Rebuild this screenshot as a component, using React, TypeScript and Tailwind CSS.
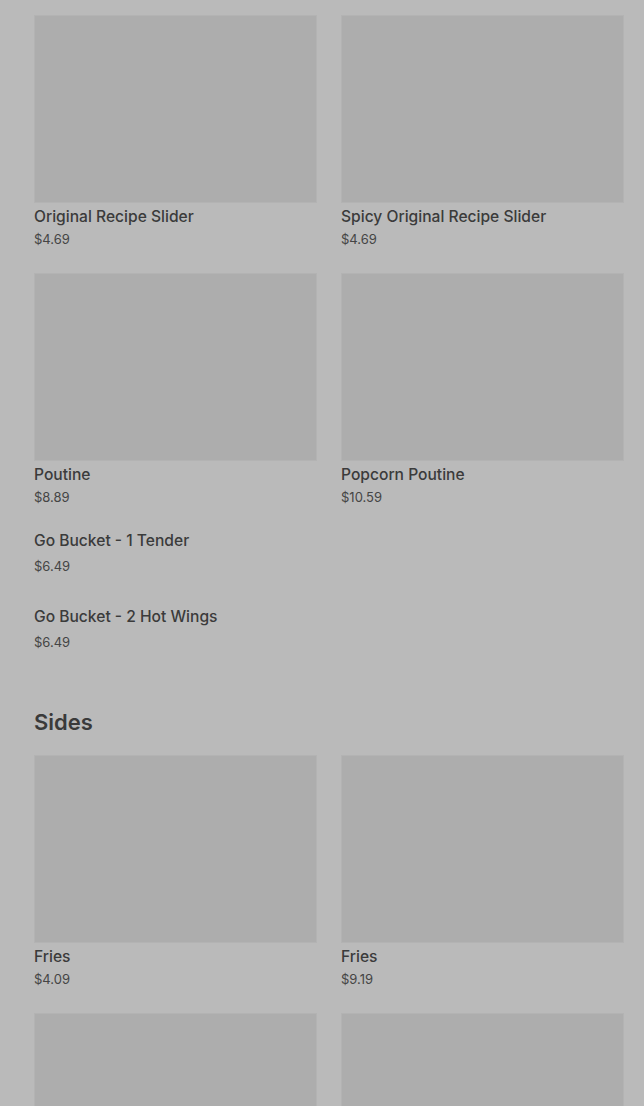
import React from "react";

type Item = { name: string; price: string };

function Card({ item }: { item?: Item }) {
  return (
    <div className="flex flex-col">
      <div className="h-[188px] w-full bg-[#adadad] border border-[#b3b3b3]" />
      {item && (
        <>
          <div className="mt-[4px] h-[20px] text-[15.6px] leading-[20px] font-medium text-[#3b3b3b]">{item.name}</div>
          <div className="mt-[2px] h-[20px] text-[13px] leading-[20px] text-[#454545]">{item.price}</div>
        </>
      )}
    </div>
  );
}

function Plain({ item }: { item: Item }) {
  return (
    <div className="flex flex-col">
      <div className="h-[20px] text-[15.6px] leading-[20px] font-medium text-[#3b3b3b]">{item.name}</div>
      <div className="mt-[5px] h-[20px] text-[13px] leading-[20px] text-[#454545]">{item.price}</div>
    </div>
  );
}

export default function App() {
  return (
    <div
      className="h-[1106px] overflow-hidden w-full bg-[#bababa] pl-[34px] pr-[20px] pt-[15px]"
      style={{ fontFamily: "Inter, 'Noto Sans', sans-serif" }}
    >
      <div className="grid grid-cols-2 gap-x-[24px] gap-y-[24px]">
        <Card item={{ name: "Original Recipe Slider", price: "$4.69" }} />
        <Card item={{ name: "Spicy Original Recipe Slider", price: "$4.69" }} />
        <Card item={{ name: "Poutine", price: "$8.89" }} />
        <Card item={{ name: "Popcorn Poutine", price: "$10.59" }} />
      </div>
      <div className="mt-[24px] flex flex-col gap-[31px]">
        <Plain item={{ name: "Go Bucket - 1 Tender", price: "$6.49" }} />
        <Plain item={{ name: "Go Bucket - 2 Hot Wings", price: "$6.49" }} />
      </div>
      <h2 className="mt-[55px] h-[30px] text-[22px] leading-[30px] font-semibold text-[#3a3a3a]">Sides</h2>
      <div className="mt-[18px] grid grid-cols-2 gap-x-[24px] gap-y-[24px]">
        <Card item={{ name: "Fries", price: "$4.09" }} />
        <Card item={{ name: "Fries", price: "$9.19" }} />
        <Card />
        <Card />
      </div>
    </div>
  );
}
